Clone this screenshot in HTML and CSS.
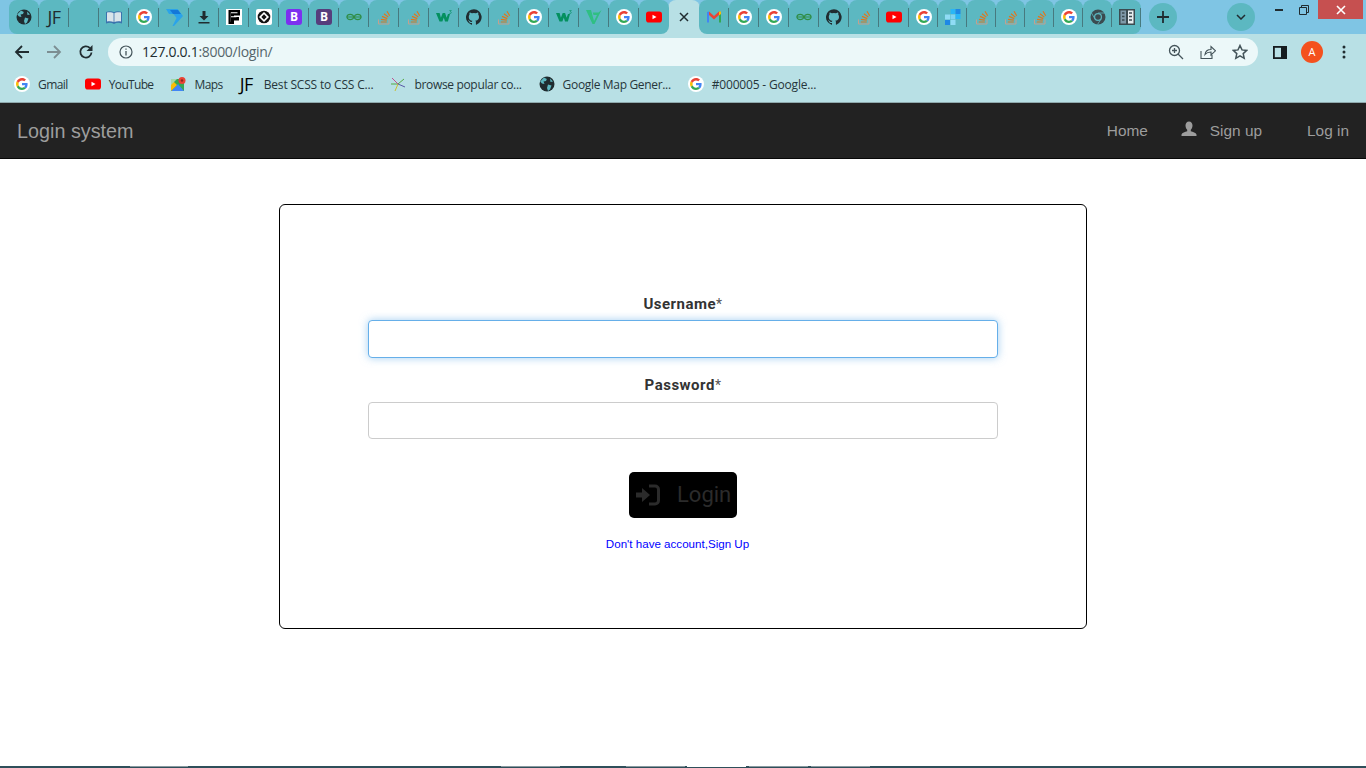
FILE: index.html
```html
<!DOCTYPE html>
<html lang="en">
<head>
<meta charset="utf-8">
<title>Login system</title>
<link rel="stylesheet" href="styles.css">
</head>
<body>
<svg class="defs" aria-hidden="true">
  <symbol id="g" viewBox="0 0 16 16">
    <circle cx="8" cy="8" r="8" fill="#fff"/>
    <path d="M13.6 8.200c0-.4 0-.8-.1-1.200H8v2.300h3.200c-.1.800-.6 1.400-1.200 1.800l1.900 1.500c1.100-1 1.700-2.500 1.700-4.400z" fill="#4285f4"/>
    <path d="M8 14c1.600 0 3-.5 3.900-1.400L10 11.100c-.5.400-1.200.6-2 .6-1.600 0-2.900-1-3.300-2.500l-2 1.500C3.600 12.700 5.600 14 8 14z" fill="#34a853"/>
    <path d="M4.700 9.200C4.500 8.400 4.500 7.600 4.700 6.800l-2-1.500c-.9 1.700-.9 3.700 0 5.400z" fill="#fbbc05"/>
    <path d="M8 4.400c.9 0 1.700.3 2.300.9l1.700-1.700C11 2.600 9.600 2 8 2 5.600 2 3.600 3.300 2.700 5.300l2 1.500C5.100 5.400 6.400 4.400 8 4.400z" fill="#ea4335"/>
  </symbol>
  <symbol id="globe" viewBox="0 0 16 16">
    <circle cx="8" cy="8" r="7.500" fill="#202c30"/>
    <path d="M5 1.500 7.800 3 7 5 4.500 5.500 5.500 8 3 7.500 1.200 5.500zM9 8.500l3.500 1-1.500 4-2 1.500-1-3zM11 2.500l3 3-2.500.5z" fill="#5cb8c1"/>
  </symbol>
  <symbol id="so" viewBox="0 0 16 16">
    <path d="M2.500 10.500v4.500h10.500v-4.500" fill="none" stroke="#c2a08f" stroke-width="1"/>
    <path d="M4.800 13h6M5 10.300l5.800.9M6 7.400l5.300 2.200M8 4.700l4.300 3.400M11 2.200l2.700 4.600" fill="none" stroke="#e0761c" stroke-width="1.200"/>
  </symbol>
  <symbol id="gfg" viewBox="0 0 16 16">
    <path d="M.8 8h14.400M8 8C7.300 6.300 5.800 5.400 4.300 5.400 2.400 5.400 1 6.500.8 8c.2 1.500 1.600 2.600 3.500 2.600 1.500 0 3-.9 3.700-2.600.7-1.700 2.200-2.600 3.700-2.600 1.900 0 3.300 1.100 3.500 2.600-.2 1.500-1.600 2.600-3.500 2.600-1.500 0-3-.9-3.700-2.600" fill="none" stroke="#2f8d46" stroke-width="1.100"/>
  </symbol>
  <symbol id="gh" viewBox="0 0 16 16">
    <path d="M8 .2a8 8 0 0 0-2.500 15.600c.4.100.5-.2.500-.4v-1.400c-2.200.5-2.700-1-2.700-1-.4-.9-.9-1.200-.9-1.200-.7-.5 0-.5 0-.5.800.1 1.200.8 1.200.8.700 1.200 1.900.9 2.300.7.100-.5.300-.9.500-1.100-1.800-.2-3.600-.9-3.600-4 0-.9.300-1.600.8-2.100-.1-.2-.4-1 .1-2.100 0 0 .7-.2 2.200.8a7.600 7.600 0 0 1 4 0c1.500-1 2.200-.8 2.200-.8.400 1.100.2 1.900.1 2.100.5.600.8 1.300.8 2.100 0 3.100-1.900 3.700-3.700 3.900.3.300.6.800.6 1.500v2.200c0 .2.100.5.500.4A8 8 0 0 0 8 .2z" fill="#202c30"/>
  </symbol>
  <symbol id="yt" viewBox="0 0 16 16">
    <rect y="2.500" width="16" height="11" rx="2.800" fill="#f00"/>
    <path d="M6.500 5.700v4.600L10.500 8z" fill="#fff"/>
  </symbol>
  <symbol id="w3" viewBox="0 0 16 16">
    <path d="M0 4h3.600l1.300 4.800L6.700 4h2.400l1.500 4.800L12 5h2l-2.100 7.500H9L7.800 8.500 6.400 12.500H3.500z" fill="#04905f"/>
    <path d="M13.300 1.500h2l-1 1.200c.7 0 1 .4 1 .9 0 .6-.5 1-1.100 1-.4 0-.8-.2-1-.5" fill="none" stroke="#04905f" stroke-width=".6"/>
  </symbol>
</svg>

<header class="chrome">
  <div class="strip">
    <div class="tabs">
      <div class="tab"><svg class="fav"><use href="#globe"/></svg></div>
      <div class="tab"><span class="jf">JF</span></div>
      <div class="tab"></div>
      <div class="tab"><svg class="fav" viewBox="0 0 16 16"><path d="M0 3C3 2 6 2 8 3.300 10 2 13 2 16 3v11.500c-3-1-5.500-1-8 .4-2.500-1.400-5-1.400-8-.4z" fill="#3a73ad"/><path d="M1 3.600C3.200 3 6 3 7.600 4.200v8.900c-1.800-1-4.400-1.100-6.600-.6zM15 3.600C12.800 3 10 3 8.400 4.200v8.900c1.800-1 4.400-1.100 6.600-.6z" fill="#d9e4ea"/></svg></div>
      <div class="tab"><svg class="fav"><use href="#g"/></svg></div>
      <div class="tab"><svg class="fav fav-big" viewBox="0 0 17 17"><path d="M0 0h11.500L17 7 8 17H6.500L10.500 9 7.500 5H3z" fill="#2aa3ea"/><path d="M4 1h8l3 4H7z" fill="#1578d8"/></svg></div>
      <div class="tab"><svg class="fav" viewBox="0 0 16 16"><path d="M6.500 2h3v5h3L8 11.500 3.500 7h3zM2.500 13h11v1.500h-11z" fill="#202c30"/></svg></div>
      <div class="tab"><svg class="fav" viewBox="0 0 16 16"><rect width="16" height="16" fill="#fff"/><path d="M2.500 1h11.500v5.500H8v1.500h5v3.500H8V15H2.500z" fill="#000"/><path d="M5 3.300h6.500v1H5v3h5.500v1H5v4.500H4.800V3.300z" fill="#fff"/></svg></div>
      <div class="tab"><svg class="fav" viewBox="0 0 16 16"><rect width="16" height="16" rx="2" fill="#fff"/><circle cx="8" cy="8" r="6.300" fill="#111"/><path d="M8 3 13 8 8 13 3 8z" fill="#fff"/><path d="M8 5.300 10.700 8 8 10.700 5.300 8z" fill="#111"/></svg></div>
      <div class="tab"><div class="boot boot-new">B</div></div>
      <div class="tab"><div class="boot boot-old">B</div></div>
      <div class="tab"><svg class="fav"><use href="#gfg"/></svg></div>
      <div class="tab"><svg class="fav"><use href="#so"/></svg></div>
      <div class="tab"><svg class="fav"><use href="#so"/></svg></div>
      <div class="tab"><svg class="fav"><use href="#w3"/></svg></div>
      <div class="tab"><svg class="fav"><use href="#gh"/></svg></div>
      <div class="tab"><svg class="fav"><use href="#so"/></svg></div>
      <div class="tab"><svg class="fav"><use href="#g"/></svg></div>
      <div class="tab"><svg class="fav"><use href="#w3"/></svg></div>
      <div class="tab"><svg class="fav" viewBox="0 0 16 16"><path d="M0 1h5l3 11 3-6H7.500L6.800 3.500H12.500L15.500 1 8.500 15H6.500z" fill="#2fbf83"/></svg></div>
      <div class="tab"><svg class="fav"><use href="#g"/></svg></div>
      <div class="tab before-active"><svg class="fav"><use href="#yt"/></svg></div>
      <div class="tab active"><svg class="close" viewBox="0 0 10 10"><path d="M1 1l8 8M9 1l-8 8" stroke="#202c30" stroke-width="1.500"/></svg></div>
      <div class="tab after-active"><svg class="fav" viewBox="0 0 16 16"><path d="M1 3 3 2.500v11H1z" fill="#4285f4"/><path d="M13 2.500l2 .5v10.500h-2z" fill="#34a853"/><path d="M3 2.500 8 7l5-4.500v3.500L8 10.500 3 6z" fill="#ea4335"/><path d="M13 2.500h2v2.500l-2 1.500z" fill="#fbbc05"/></svg></div>
      <div class="tab"><svg class="fav"><use href="#g"/></svg></div>
      <div class="tab"><svg class="fav"><use href="#g"/></svg></div>
      <div class="tab"><svg class="fav"><use href="#gfg"/></svg></div>
      <div class="tab"><svg class="fav"><use href="#gh"/></svg></div>
      <div class="tab"><svg class="fav"><use href="#so"/></svg></div>
      <div class="tab"><svg class="fav"><use href="#yt"/></svg></div>
      <div class="tab narrow"><svg class="fav"><use href="#g"/></svg></div>
      <div class="tab narrow"><svg class="fav" viewBox="0 0 16 16"><rect x="5.500" y="5.500" width="5" height="5" fill="#7fd3f2"/><rect x="5.500" y="0" width="5" height="5" fill="#29b6f6"/><rect x="10.500" y="0" width="5" height="5" fill="#1e88e5"/><rect x="10.500" y="5" width="5" height="5" fill="#29b6f6"/><rect y="5.500" width="5" height="5" fill="#90dcf5"/><rect y="11" width="5" height="5" fill="#1e88e5"/><rect x="5.500" y="11" width="5" height="5" fill="#90dcf5"/></svg></div>
      <div class="tab narrow"><svg class="fav"><use href="#so"/></svg></div>
      <div class="tab narrow"><svg class="fav"><use href="#so"/></svg></div>
      <div class="tab narrow"><svg class="fav"><use href="#so"/></svg></div>
      <div class="tab narrow"><svg class="fav"><use href="#g"/></svg></div>
      <div class="tab narrow"><svg class="fav" viewBox="0 0 16 16"><circle cx="8" cy="8" r="7.500" fill="#3b4b50"/><circle cx="8" cy="8" r="4" fill="#5cb8c1"/><circle cx="8" cy="8" r="2.800" fill="#3b4b50"/><path d="M8 4h7M5 10 1.500 4M11 10 7.500 15.500" stroke="#5cb8c1" stroke-width=".8"/></svg></div>
      <div class="tab narrow"><svg class="fav" viewBox="0 0 16 16"><rect width="16" height="16" fill="#3b4b50"/><rect x="1.500" y="1.500" width="5.500" height="13" fill="#7f99a8"/><rect x="9" y="1.500" width="5.500" height="13" fill="#e8eef0"/><path d="M3 4h2.500M3 7.500h2.500M3 11h2.500M10 4h3M10 7.500h3M10 11h3" stroke="#3b4b50" stroke-width="1.500"/></svg></div>
    </div>
    <div class="round-btn new-tab"><svg viewBox="0 0 14 14"><path d="M7 1v12M1 7h12" stroke="#202c30" stroke-width="1.800"/></svg></div>
    <div class="round-btn tab-search"><svg viewBox="0 0 10 6"><path d="M1 1l4 4 4-4" fill="none" stroke="#202c30" stroke-width="1.500"/></svg></div>
    <div class="win">
      <div class="win-btn"><svg viewBox="0 0 10 10"><path d="M1 5h8" stroke="#202c30" stroke-width="2"/></svg></div>
      <div class="win-btn"><svg viewBox="0 0 10 10"><path d="M.5 2.500h7v7h-7zM2.500 2.500v-2h7v7h-2" fill="none" stroke="#202c30"/></svg></div>
      <div class="win-close"><svg viewBox="0 0 10 10"><path d="M1 1l8 8M9 1l-8 8" stroke="#fff" stroke-width="1.600"/></svg></div>
    </div>
  </div>

  <div class="toolbar">
    <svg class="tool" viewBox="0 0 16 16"><path d="M15 8H2M8 2 2 8l6 6" fill="none" stroke="#202c30" stroke-width="1.800"/></svg>
    <svg class="tool" viewBox="0 0 16 16"><path d="M1 8h13M8 2l6 6-6 6" fill="none" stroke="#7c8e92" stroke-width="1.800"/></svg>
    <svg class="tool" viewBox="0 0 16 16"><path d="M13.500 8.500A5.600 5.600 0 1 1 11.800 3.900" fill="none" stroke="#202c30" stroke-width="1.800"/><path d="M14.500 1v6h-6z" fill="#202c30"/></svg>
    <div class="omnibox">
      <svg class="info" viewBox="0 0 14 14"><circle cx="7" cy="7" r="6" fill="none" stroke="#44545a" stroke-width="1.200"/><path d="M7 6v4.500M7 3.500v1.300" stroke="#44545a" stroke-width="1.300"/></svg>
      <span class="url"><span class="url-host">127.0.0.1</span>:8000/login/</span>
      <div class="omni-actions">
        <svg class="omni-ic" viewBox="0 0 16 16"><circle cx="6.500" cy="6.500" r="5" fill="none" stroke="#44545a" stroke-width="1.300"/><path d="M10 10l5 5M4 6.500h5M6.500 4v5" stroke="#44545a" stroke-width="1.300"/></svg>
        <svg class="omni-ic" viewBox="0 0 16 16"><path d="M1 7v7.500h11V11M5 10.500c.5-3.500 3-5 6-5V2.500l4.500 4.300L11 11V8c-2.500 0-4.500.7-6 2.500z" fill="none" stroke="#44545a" stroke-width="1.100"/></svg>
        <svg class="omni-ic" viewBox="0 0 16 16"><path d="M8 1.500l2 4.400 4.800.5-3.600 3.200 1 4.700L8 11.900l-4.200 2.400 1-4.700L1.200 6.400 6 5.900z" fill="none" stroke="#44545a" stroke-width="1.500"/></svg>
      </div>
    </div>
    <svg class="side" viewBox="0 0 14 13"><rect x=".9" y=".9" width="12.200" height="11.200" fill="none" stroke="#151c1f" stroke-width="1.800"/><rect x="8" y="1" width="5" height="11" fill="#151c1f"/></svg>
    <div class="avatar">A</div>
    <svg class="menu" viewBox="0 0 4 14"><circle cx="2" cy="2" r="1.500" fill="#202c30"/><circle cx="2" cy="7" r="1.500" fill="#202c30"/><circle cx="2" cy="12" r="1.500" fill="#202c30"/></svg>
  </div>

  <div class="bookmarks">
    <div class="bm"><svg class="fav"><use href="#g"/></svg><span class="tight">Gmail</span></div>
    <div class="bm"><svg class="fav"><use href="#yt"/></svg><span class="tighter">YouTube</span></div>
    <div class="bm"><svg class="fav" viewBox="0 0 16 16"><path d="M1 3h13v12H1z" fill="#34a853"/><path d="M1 15l7-7 6 7z" fill="#4285f4"/><path d="M1 3l6 6-6 6z" fill="#fbbc05"/><path d="M1 3h6l-6 6z" fill="#a6d8a8"/><circle cx="12" cy="4.500" r="3.500" fill="#ea4335"/><circle cx="12" cy="4.500" r="1.200" fill="#8c2a22"/></svg><span class="tight">Maps</span></div>
    <div class="bm"><span class="jf jf-bm">JF</span><span>Best SCSS to CSS C...</span></div>
    <div class="bm"><svg class="fav" viewBox="0 0 16 16"><path d="M14 3 8 8M8 8H1" stroke="#56a844"/><path d="M8 8 5 15" stroke="#c9c030"/><path d="M8 8l7 3" stroke="#5b5ba8"/><path d="M2 2l6 6" stroke="#c05090"/></svg><span class="snug">browse popular co...</span></div>
    <div class="bm"><svg class="fav"><use href="#globe"/></svg><span class="snug">Google Map Gener...</span></div>
    <div class="bm"><svg class="fav"><use href="#g"/></svg><span>#000005 - Google...</span></div>
  </div>
</header>

<nav class="navbar">
  <a class="brand">Login system</a>
  <div class="nav-links">
    <a class="nav-link">Home</a>
    <a class="nav-link nav-signup"><svg class="user" viewBox="0 0 16 16"><path d="M8 .5c2.200 0 3.500 1.700 3.500 4 0 1.800-.8 3.400-1.700 4.300v1.400c2 .7 5.200 1.500 5.700 3.300v1.500H.5v-1.500c.5-1.800 3.700-2.600 5.700-3.300V8.800C5.300 7.900 4.500 6.300 4.500 4.500c0-2.300 1.300-4 3.500-4z" fill="#9d9d9d"/></svg><span>Sign up</span></a>
    <a class="nav-link">Log in</a>
  </div>
</nav>

<main class="page">
  <form class="card">
    <label class="field-label" for="username">Username<span class="req">*</span></label>
    <input class="field field-focus" id="username" type="text">
    <label class="field-label label-second" for="password">Password<span class="req">*</span></label>
    <input class="field" id="password" type="password">
    <button class="login-btn" type="button">
      <svg class="login-ic" viewBox="0 0 24 22"><path d="M0 8.500h6V4l8 7-8 7v-4.500H0z" fill="#2b2b2b"/><path d="M13 2h6c2 0 3.500 1.500 3.500 3.500v11c0 2-1.500 3.500-3.500 3.500h-6" fill="none" stroke="#2b2b2b" stroke-width="3"/></svg>
      <span>Login</span>
    </button>
    <a class="signup-link">Don't have account,Sign Up</a>
  </form>
</main>

<div class="taskbar">
  <i class="seg seg-a"></i>
  <i class="seg seg-b"></i>
  <i class="seg seg-c"></i>
  <i class="seg seg-on"></i>
  <i class="seg seg-d"></i>
  <i class="seg seg-e"></i>
</div>
</body>
</html>
```

FILE: styles.css
```css
* { box-sizing: border-box; }
html, body { height: 100%; }
body {
  margin: 0;
  height: 768px;
  overflow: hidden;
  display: flex;
  flex-direction: column;
  background: #fff;
  font-family: "Liberation Sans", Arial, sans-serif;
}
.defs { display: none; }

/* browser chrome */
.chrome { flex: none; height: 103px; background: #b8e0e5; display: flex; flex-direction: column; }
.strip { height: 34px; background: #7fc5e4; display: flex; align-items: flex-start; isolation: isolate; }
.tabs { display: flex; height: 34px; margin-left: 9px; width: 1132px; }
.tab {
  position: relative;
  flex: none;
  width: 30px;
  height: 34px;
  background: #5cb8c1;
  border-radius: 8px 8px 0 0;
  display: flex;
  align-items: center;
  justify-content: center;
}
.tab.narrow { width: 29px; }
.tab:first-child { border-bottom-left-radius: 8px; }
.tab:last-child { border-bottom-right-radius: 8px; }
.tab::after {
  content: "";
  position: absolute;
  right: 0;
  top: 8px;
  width: 1px;
  height: 19px;
  background: #47797f;
}
.tab.before-active { border-bottom-right-radius: 8px; }
.tab.before-active::after, .tab.active::after { display: none; }
.tab.after-active { border-bottom-left-radius: 8px; }
.tab.active { background: #b8e0e5; width: 32px; margin: 0 -1px; z-index: -1; }
.tab.active::before {
  content: "";
  position: absolute;
  left: -8px;
  right: -8px;
  bottom: 0;
  height: 8px;
  background: #b8e0e5;
}
.fav { width: 16px; height: 16px; flex: none; display: block; }
.fav-big { width: 17px; height: 17px; }
.close { width: 10px; height: 10px; }
.jf { font: 18px/1 "Open Sans", sans-serif; color: #202c30; letter-spacing: -.5px; }
.jf-bm { width: 16px; color: #000; font-size: 18px; }
.boot {
  width: 16px;
  height: 16px;
  border-radius: 3px;
  color: #fff;
  font: 700 12px/16px "Open Sans", sans-serif;
  text-align: center;
}
.boot-new { background: #7c2ff0; }
.boot-old { background: #563d7c; }

.round-btn {
  width: 28px;
  height: 28px;
  border-radius: 50%;
  background: #5cb8c1;
  margin-top: 3px;
  display: flex;
  align-items: center;
  justify-content: center;
}
.new-tab { margin-left: 8px; }
.new-tab svg { width: 14px; height: 14px; }
.tab-search { margin-left: 50px; }
.tab-search svg { width: 10px; height: 6px; }
.win { margin-left: auto; margin-right: 3px; display: flex; }
.win-btn { width: 25px; height: 19px; display: flex; align-items: center; justify-content: center; }
.win-btn svg { width: 10px; height: 10px; }
.win-close { width: 45px; height: 19px; margin-left: 2px; background: #c65050; display: flex; align-items: center; justify-content: center; }
.win-close svg { width: 10px; height: 10px; }

.toolbar { height: 36px; display: flex; align-items: center; padding: 0 0 0 14px; }
.tool { width: 16px; height: 16px; flex: none; margin-right: 16px; }
.omnibox {
  width: 1150px;
  height: 28px;
  margin-left: -2px;
  margin-top: -1px;
  border-radius: 14px;
  background: #ecf8f9;
  display: flex;
  align-items: center;
  padding: 0 10px 0 11px;
}
.info { width: 14px; height: 14px; flex: none; }
.url { font: 14px "Open Sans", sans-serif; color: #55656b; margin-left: 9px; letter-spacing: -.3px; }
.url-host { color: #202c30; }
.omni-actions { margin-left: auto; display: flex; gap: 16px; }
.omni-ic { width: 16px; height: 16px; }
.side { width: 14px; height: 13px; flex: none; margin-left: 15px; }
.avatar {
  width: 22px;
  height: 22px;
  border-radius: 50%;
  background: #f4511e;
  color: #fff;
  font: 11px/22px "Open Sans", sans-serif;
  text-align: center;
  flex: none;
  margin-left: 14px;
}
.menu { width: 4px; height: 14px; flex: none; margin-left: 19px; }

.bookmarks {
  height: 33px;
  border-bottom: 1px solid #8fa9ad;
  display: flex;
  align-items: center;
  padding: 0 0 4px 14px;
  gap: 17px;
  font: 12px "Open Sans", sans-serif;
  color: #26363b;
  letter-spacing: -.18px;
}
.bm { display: flex; align-items: center; gap: 8px; }
.tight { letter-spacing: -.55px; }
.tighter { letter-spacing: -.68px; }
.snug { letter-spacing: -.33px; }

/* navbar */
.navbar {
  flex: none;
  height: 56px;
  background: #222;
  border-bottom: 1px solid #080808;
  display: flex;
  align-items: center;
  justify-content: space-between;
  padding: 0 17px;
}
.brand { font-size: 19.8px; color: #9d9d9d; padding-top: 2px; }
.nav-links { display: flex; align-items: center; gap: 45px; }
.nav-link { font-size: 15.4px; color: #9d9d9d; display: flex; align-items: center; gap: 13px; }
.nav-signup { margin-left: -12px; }
.user { width: 16px; height: 16px; margin-top: -3px; }

/* login card */
.page { flex: 1; display: flex; justify-content: center; align-items: flex-start; padding-top: 45px; }
.card {
  width: 808px;
  height: 425px;
  border: 1px solid #000;
  border-radius: 6px;
  display: flex;
  flex-direction: column;
  align-items: center;
  padding-top: 90px;
}
.field-label { font: 700 15px/18px Roboto, sans-serif; color: #333; letter-spacing: .5px; margin-bottom: 7px; }
.req { font-weight: 400; font-size: 14px; line-height: 1; color: #555; }
.label-second { margin-top: 18px; margin-bottom: 8px; }
.field {
  width: 630px;
  height: 37px;
  border: 1px solid #ccc;
  border-radius: 4px;
  background: #fff;
  outline: none;
  flex: none;
}
.field-focus { height: 38px; border-color: #66afe9; box-shadow: 0 0 8px rgba(102, 175, 233, .6); }
.login-btn {
  width: 108px;
  height: 46px;
  margin-top: 33px;
  background: #000;
  border: 0;
  border-radius: 5px;
  color: #2b2b2b;
  font: 22px/1 Roboto, sans-serif;
  display: flex;
  align-items: center;
  justify-content: flex-start;
  gap: 17px;
  padding: 0 0 0 7px;
}
.login-ic { width: 24px; height: 22px; flex: none; }
.signup-link { margin: 19px 11px 0 0; font-size: 11.6px; line-height: 14px; color: #00f; }

/* window edge */
.taskbar { flex: none; height: 2px; background: #2f4f5a; display: flex; }
.seg { display: block; height: 1px; background: #8a9aa0; flex: none; }
.seg-a { width: 58px; margin-left: 130px; }
.seg-b { width: 59px; margin-left: 313px; }
.seg-c { width: 59px; margin-left: 66px; }
.seg-on { width: 59px; margin-left: 2px; background: #fff; }
.seg-d { width: 59px; margin-left: 3px; }
.seg-e { width: 59px; margin-left: 3px; }
```
